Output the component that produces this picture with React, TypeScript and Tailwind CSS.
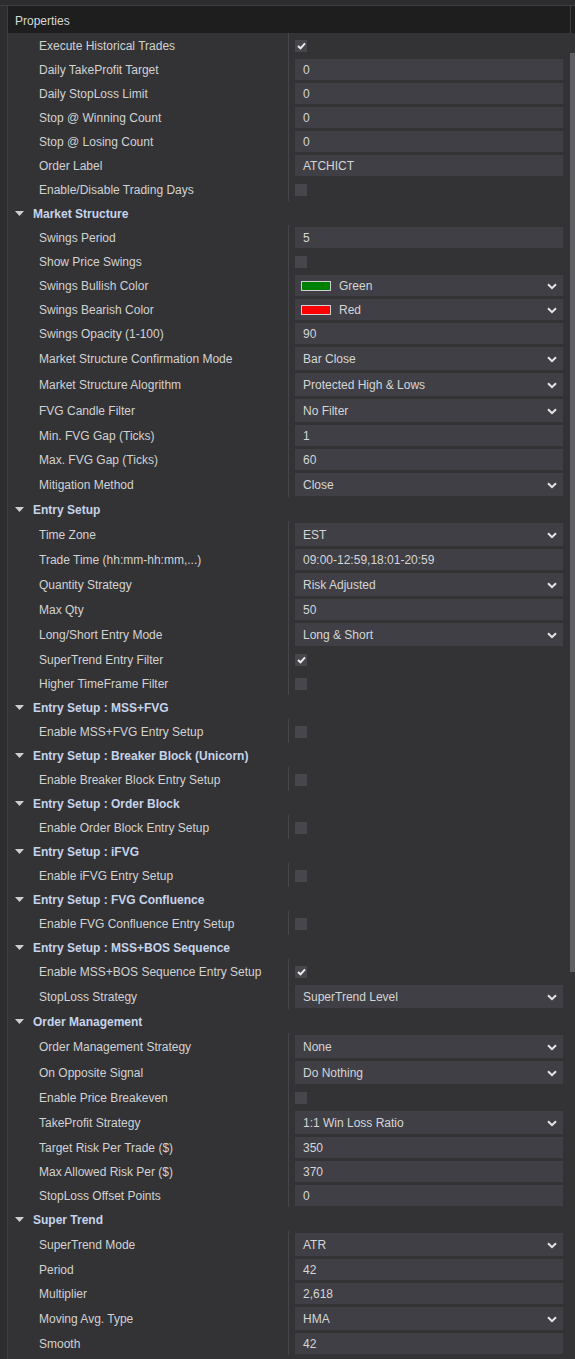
import type { ReactNode } from "react";

type Field =
  | { kind: "check"; label: string; on: boolean }
  | { kind: "text"; label: string; value: string }
  | { kind: "select"; label: string; value: string }
  | { kind: "color"; label: string; value: string; swatch: string };

interface Group {
  title?: string;
  fields: Field[];
}

const check = (label: string, on = false): Field => ({ kind: "check", label, on });
const text = (label: string, value: string): Field => ({ kind: "text", label, value });
const select = (label: string, value: string): Field => ({ kind: "select", label, value });

const groups: Group[] = [
  {
    fields: [
      check("Execute Historical Trades", true),
      text("Daily TakeProfit Target", "0"),
      text("Daily StopLoss Limit", "0"),
      text("Stop @ Winning Count", "0"),
      text("Stop @ Losing Count", "0"),
      text("Order Label", "ATCHICT"),
      check("Enable/Disable Trading Days"),
    ],
  },
  {
    title: "Market Structure",
    fields: [
      text("Swings Period", "5"),
      check("Show Price Swings"),
      { kind: "color", label: "Swings Bullish Color", value: "Green", swatch: "#008000" },
      { kind: "color", label: "Swings Bearish Color", value: "Red", swatch: "#ff0000" },
      text("Swings Opacity (1-100)", "90"),
      select("Market Structure Confirmation Mode", "Bar Close"),
      select("Market Structure Alogrithm", "Protected High & Lows"),
      select("FVG Candle Filter", "No Filter"),
      text("Min. FVG Gap (Ticks)", "1"),
      text("Max. FVG Gap (Ticks)", "60"),
      select("Mitigation Method", "Close"),
    ],
  },
  {
    title: "Entry Setup",
    fields: [
      select("Time Zone", "EST"),
      text("Trade Time (hh:mm-hh:mm,...)", "09:00-12:59,18:01-20:59"),
      select("Quantity Strategy", "Risk Adjusted"),
      text("Max Qty", "50"),
      select("Long/Short Entry Mode", "Long & Short"),
      check("SuperTrend Entry Filter", true),
      check("Higher TimeFrame Filter"),
    ],
  },
  { title: "Entry Setup : MSS+FVG", fields: [check("Enable MSS+FVG Entry Setup")] },
  { title: "Entry Setup : Breaker Block (Unicorn)", fields: [check("Enable Breaker Block Entry Setup")] },
  { title: "Entry Setup : Order Block", fields: [check("Enable Order Block Entry Setup")] },
  { title: "Entry Setup : iFVG", fields: [check("Enable iFVG Entry Setup")] },
  { title: "Entry Setup : FVG Confluence", fields: [check("Enable FVG Confluence Entry Setup")] },
  {
    title: "Entry Setup : MSS+BOS Sequence",
    fields: [
      check("Enable MSS+BOS Sequence Entry Setup", true),
      select("StopLoss Strategy", "SuperTrend Level"),
    ],
  },
  {
    title: "Order Management",
    fields: [
      select("Order Management Strategy", "None"),
      select("On Opposite Signal", "Do Nothing"),
      check("Enable Price Breakeven"),
      select("TakeProfit Strategy", "1:1 Win Loss Ratio"),
      text("Target Risk Per Trade ($)", "350"),
      text("Max Allowed Risk Per ($)", "370"),
      text("StopLoss Offset Points", "0"),
    ],
  },
  {
    title: "Super Trend",
    fields: [
      select("SuperTrend Mode", "ATR"),
      text("Period", "42"),
      text("Multiplier", "2,618"),
      select("Moving Avg. Type", "HMA"),
      text("Smooth", "42"),
    ],
  },
];

function Chevron() {
  return (
    <svg width="10" height="7" viewBox="0 0 10 7" className="ml-auto mr-[4px] shrink-0">
      <path d="M1 1.2 L5 5.2 L9 1.2" fill="none" stroke="#e6e6e6" strokeWidth="2" />
    </svg>
  );
}

function Box({ tall, children }: { tall?: boolean; children: ReactNode }) {
  return (
    <div
      className={
        "flex w-[268px] items-center bg-[#3f3f45] pl-[8px] pr-[2px] pt-[1px] text-[#d6d6d6] " +
        (tall ? "h-[23px]" : "h-[21px]")
      }
    >
      {children}
    </div>
  );
}

function Value({ field }: { field: Field }) {
  if (field.kind === "check") {
    return (
      <div className="mt-[5px] flex h-[12px] w-[12px] items-center justify-center bg-[#46464c]">
        {field.on && (
          <svg width="9" height="8" viewBox="0 0 9 8">
            <path d="M1 4 L3.5 6.3 L8 1.3" fill="none" stroke="#ececec" strokeWidth="2" />
          </svg>
        )}
      </div>
    );
  }
  if (field.kind === "color") {
    return (
      <Box>
        <span
          className="-ml-[2px] mr-[8px] h-[10px] w-[30px] shrink-0 border border-[#cfcfcf]"
          style={{ backgroundColor: field.swatch }}
        />
        <span>{field.value}</span>
        <Chevron />
      </Box>
    );
  }
  if (field.kind === "select") {
    return (
      <Box tall>
        <span>{field.value}</span>
        <Chevron />
      </Box>
    );
  }
  return (
    <Box>
      <span>{field.value}</span>
    </Box>
  );
}

function Row({ field }: { field: Field }) {
  const tall = field.kind === "select";
  return (
    <div className={"flex " + (tall ? "h-[26px]" : "h-6")}>
      <div className="flex w-[280px] items-center pl-[31px] pt-[2px] text-[#d2d2d2]">{field.label}</div>
      <div className="w-px bg-[#45454a]" />
      <div className="flex-1 pl-[6px] pt-[2px]">
        <Value field={field} />
      </div>
    </div>
  );
}

function GroupHeader({ title }: { title: string }) {
  return (
    <div className="flex h-6 items-center pt-[1px]">
      <svg width="9" height="5" viewBox="0 0 9 5" className="ml-[7px] mr-[9px]">
        <path d="M0 0 H9 L4.5 5 Z" fill="#cfcfcf" />
      </svg>
      <span className="pt-[1px] font-bold text-[#c6d4ea]">{title}</span>
    </div>
  );
}

export default function App() {
  return (
    <div
      className="flex h-[1359px] w-[575px] flex-col overflow-hidden bg-[#2d2d30] text-[12px] leading-none"
      style={{ fontFamily: '"Liberation Sans", Arial, sans-serif' }}
    >
      <div className="h-[6px] shrink-0 border-b border-[#3e3e42]" />
      <div className="flex flex-1">
        <div className="w-[8px] shrink-0 border-r border-[#3e3e42]" />
        <div className="flex w-[562px] flex-col bg-[#333336]">
          <div className="flex h-[27px] shrink-0 items-center bg-[#1e1e1e] pl-[7px] pt-[2px] text-[#d8d8d8]">
            Properties
          </div>
          {groups.map((group, i) => (
            <div key={i}>
              {group.title && <GroupHeader title={group.title} />}
              {group.fields.map((field) => (
                <Row key={field.label} field={field} />
              ))}
            </div>
          ))}
        </div>
        <div className="flex w-[5px] flex-col">
          <div className="h-[27px] border-l border-[#3e3e42] bg-[#1e1e1e]" />
          <div className="h-[20px] bg-[#333336]" />
          <div className="h-[919px] bg-[#5f5f63]" />
          <div className="flex-1 bg-[#333336]" />
        </div>
      </div>
    </div>
  );
}
